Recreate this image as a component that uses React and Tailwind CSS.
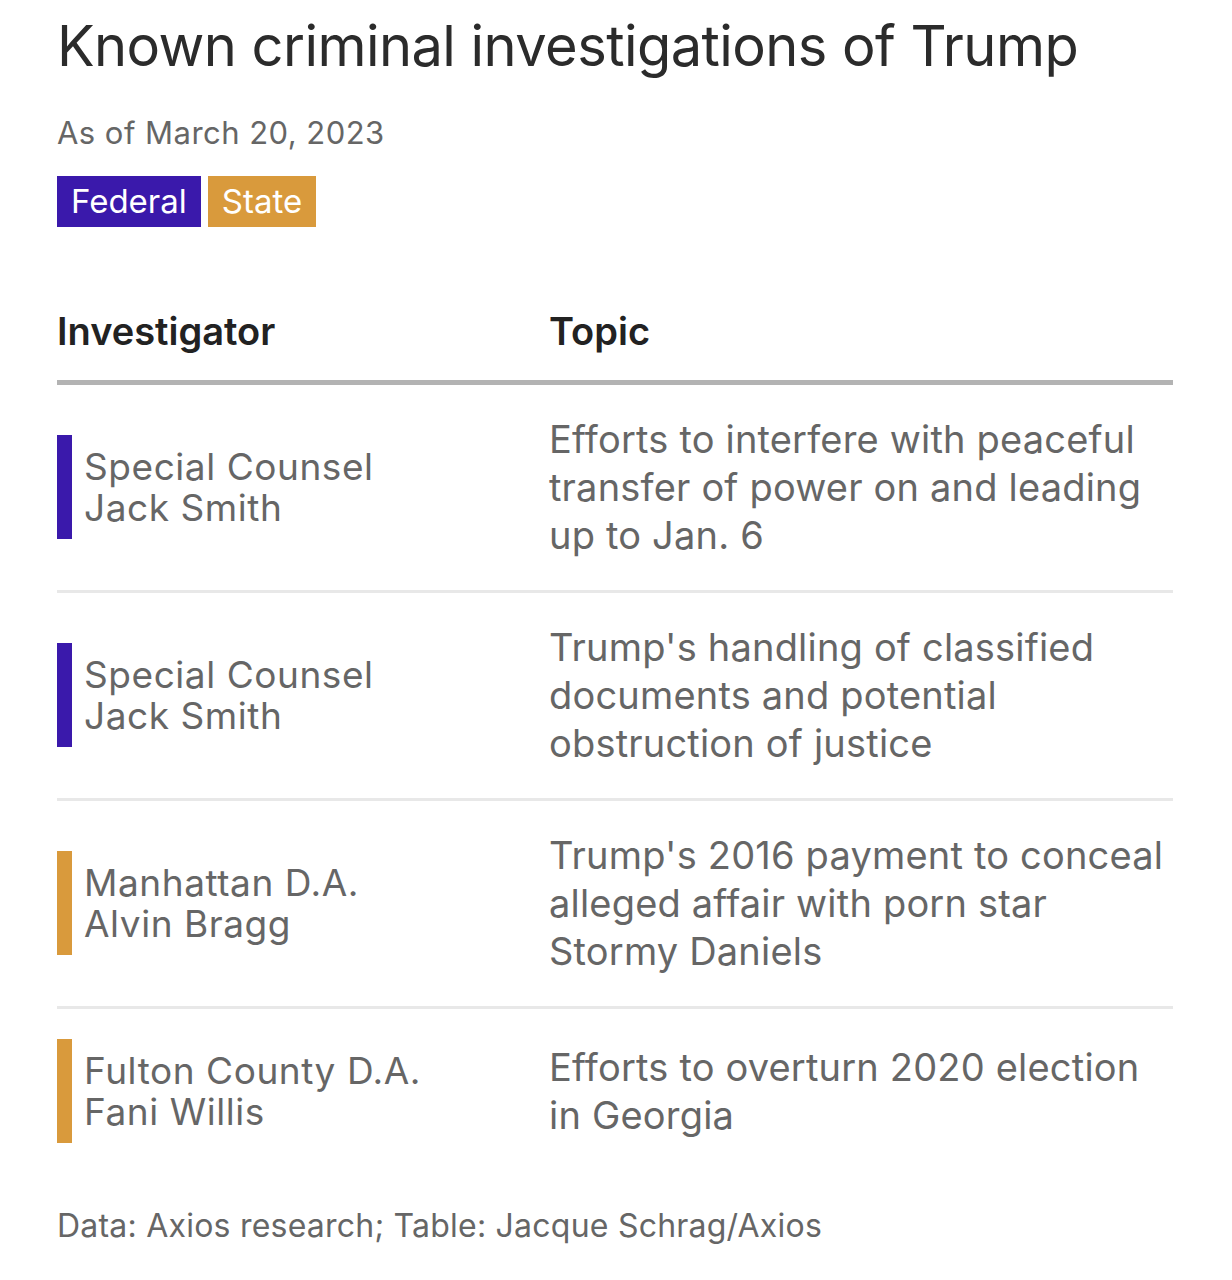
const rows = [
  {
    kind: "federal",
    who: ["Special Counsel", "Jack Smith"],
    topic: [
      "Efforts to interfere with peaceful",
      "transfer of power on and leading",
      "up to Jan. 6",
    ],
  },
  {
    kind: "federal",
    who: ["Special Counsel", "Jack Smith"],
    topic: [
      "Trump's handling of classified",
      "documents and potential",
      "obstruction of justice",
    ],
  },
  {
    kind: "state",
    who: ["Manhattan D.A.", "Alvin Bragg"],
    topic: [
      "Trump's 2016 payment to conceal",
      "alleged affair with porn star",
      "Stormy Daniels",
    ],
  },
  {
    kind: "state",
    who: ["Fulton County D.A.", "Fani Willis"],
    topic: ["Efforts to overturn 2020 election", "in Georgia"],
  },
];

const App = () => {
  return (
    <div className="min-h-screen bg-white font-['Inter',sans-serif] pl-[57px] pr-[59px] pt-[14px] pb-10">
      <h1 className="text-[56px] leading-[64px] tracking-[-0.01em] text-[#2b2b2b] whitespace-nowrap">
        Known criminal investigations of Trump
      </h1>
      <p className="mt-[37px] text-[31px] leading-[36px] tracking-[0.015em] text-[#666666]">
        As of March 20, 2023
      </p>

      <div className="mt-[25px] flex gap-[7px]">
        <span className="h-[51px] px-[14px] flex items-center bg-[#3a19ab] text-white text-[33px]">
          Federal
        </span>
        <span className="h-[51px] px-[14px] flex items-center bg-[#d99a3c] text-white text-[33px]">
          State
        </span>
      </div>

      <div className="mt-[81px] flex pb-[26px] border-b-[5px] border-[#b3b3b3] text-[38px] leading-[46px] font-semibold text-[#222222]">
        <div className="w-[492px]">Investigator</div>
        <div>Topic</div>
      </div>

      {rows.map((row, i) => (
        <div
          key={i}
          className={
            "flex items-center pt-[30px] pb-[31px] " +
            (i < rows.length - 1 ? "border-b-[3px] border-[#e8e8e8]" : "")
          }
        >
          <div className="w-[492px] flex items-center gap-3">
            <div
              className={
                "w-[15px] h-[104px] shrink-0 " +
                (row.kind === "federal" ? "bg-[#3a19ab]" : "bg-[#d99a3c]")
              }
            />
            <div className="text-[37px] leading-[41px] tracking-[0.015em] text-[#666666]">
              {row.who.map((line) => (
                <div key={line} className="whitespace-nowrap">
                  {line}
                </div>
              ))}
            </div>
          </div>
          <div className="text-[38px] leading-[48px] tracking-[0.005em] text-[#666666]">
            {row.topic.map((line) => (
              <div key={line} className="whitespace-nowrap">
                {line}
              </div>
            ))}
          </div>
        </div>
      ))}

      <p className="mt-[33px] text-[32px] leading-[38px] tracking-[0.007em] text-[#666666] whitespace-nowrap">
        Data: Axios research; Table: Jacque Schrag/Axios
      </p>
    </div>
  );
};

export default App;
